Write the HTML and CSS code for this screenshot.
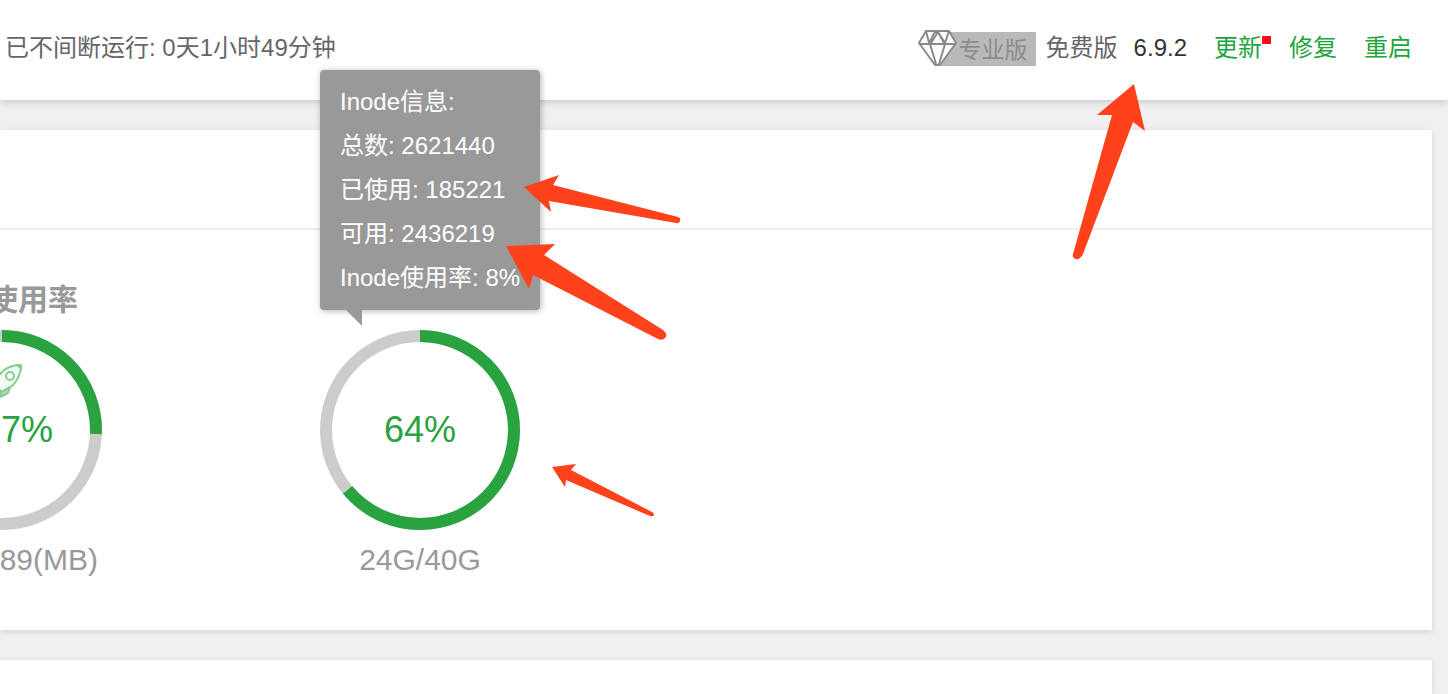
FILE: index.html
```html
<!DOCTYPE html>
<html lang="zh-CN">
<head>
<meta charset="utf-8">
<title>Inode信息</title>
<link rel="stylesheet" href="styles.css">
</head>
<body>
<header class="topbar">
  <span class="uptime">已不间断运行: 0天1小时49分钟</span>
  <div class="topbar-right">
    <span class="badge">
      <svg class="badge-gem" width="40" height="36" viewBox="0 0 40 36" aria-hidden="true">
        <path d="M8 1H31L38 13L22 35H17L1 13Z" fill="#fff" stroke="#8a8a8a" stroke-width="2" stroke-linejoin="round"/>
        <path d="M1 14H38M8 1L11 13L17 2L20 2L27 13L31 1M13 13L20 2M26 13L20 2M12 14L18 34M27 14L21 34" fill="none" stroke="#8a8a8a" stroke-width="2" stroke-linejoin="round"/>
      </svg>
      <span class="badge-label">专业版</span>
    </span>
    <span class="edition">免费版</span>
    <span class="version">6.9.2</span>
    <nav class="actions">
      <a class="has-update" href="#update">更新</a>
      <a href="#repair">修复</a>
      <a href="#restart">重启</a>
    </nav>
  </div>
</header>
<main class="content">
  <section class="panel">
    <div class="panel-head"></div>
    <div class="gauges">
      <div class="gauge gauge-memory">
        <h3 class="gauge-title">使用率</h3>
        <div class="ring">
          <svg width="200" height="200" viewBox="0 0 200 200" aria-hidden="true">
            <circle class="track" cx="100" cy="100" r="94"/>
            <circle class="bar" cx="100" cy="100" r="94" pathLength="100" stroke-dasharray="25.7 100" transform="rotate(-90 100 100)"/>
            <g fill="none" stroke="#86cc93" stroke-width="2" stroke-linejoin="round">
              <path d="M119 35C110 35 103 38 98 44L91 54L100 62L110 56C116 50 119 44 119 35Z" fill="#f1faf3"/>
              <circle cx="108" cy="46" r="4"/>
              <path d="M99 62L99 67L106 63L108 57Z" fill="#a9dbb2"/>
            </g>
            <path d="M113 34H120V41Z" fill="#86cc93"/>
          </svg>
          <span class="ring-value">7%</span>
        </div>
        <div class="gauge-label">89(MB)</div>
      </div>
      <div class="gauge gauge-disk">
        <div class="ring">
          <svg width="200" height="200" viewBox="0 0 200 200" aria-hidden="true">
            <circle class="track" cx="100" cy="100" r="94"/>
            <circle class="bar" cx="100" cy="100" r="94" pathLength="100" stroke-dasharray="64 100" transform="rotate(-90 100 100)"/>
          </svg>
          <span class="ring-value">64%</span>
          <div class="tooltip" role="tooltip">
            <div>Inode信息:</div>
            <div>总数: 2621440</div>
            <div>已使用: 185221</div>
            <div>可用: 2436219</div>
            <div>Inode使用率: 8%</div>
          </div>
        </div>
        <div class="gauge-label">24G/40G</div>
      </div>
    </div>
  </section>
  <section class="panel panel-next"></section>
</main>
<svg class="marks marks-gauge" width="190" height="350" viewBox="500 170 190 350" aria-hidden="true">
  <path d="M524 187L559 175L553 185L678 217Q681 218 680 221Q679 224 676 223L549 201L551 212Z"/>
  <path d="M506 246L555 244L544 255L663 330Q667 333 666 337Q663 341 658 339L533 275L529 289Z"/>
  <path d="M552 467L576 464L571 470L652 512Q654 513 654 515Q653 517 650 516L566 480L565 487Z"/>
</svg>
<svg class="marks marks-version" width="80" height="180" viewBox="1070 82 80 180" aria-hidden="true">
  <path d="M1134 84L1145 131L1133 122L1083 254Q1080 260 1076 259Q1072 258 1073 254L1112 115H1097Z"/>
</svg>
</body>
</html>
```
FILE: styles.css
```css
* {
  box-sizing: border-box;
}

body {
  position: relative;
  display: flex;
  flex-direction: column;
  height: 100vh;
  margin: 0;
  overflow: hidden;
  background: #f0f0f0;
  color: #666;
  font: 24px/44px "Liberation Sans", "Noto Sans CJK SC", sans-serif;
}

.topbar {
  display: flex;
  flex: none;
  justify-content: space-between;
  height: 100px;
  padding: 26px 36px 0 5px;
  background: #fff;
  box-shadow: 0 1px 8px rgba(0, 0, 0, 0.2);
}

.topbar-right,
.actions {
  display: flex;
}

.badge {
  position: relative;
  width: 118px;
  height: 36px;
  margin: 4px 10px 0 0;
  padding-left: 41px;
  background: linear-gradient(#b9b9b9, #b9b9b9) 18px 2px / 100px 34px no-repeat;
  color: #8c8c8c;
  font-size: 23px;
  line-height: 40px;
}

.badge-gem {
  position: absolute;
  top: 0;
  left: 0;
}

.version {
  margin: 0 27px 0 16px;
  color: #333;
}

.actions {
  gap: 27px;
}

.actions a {
  color: #20a53a;
  text-decoration: none;
}

.has-update {
  position: relative;
}

.has-update::after {
  content: "";
  position: absolute;
  top: 10px;
  right: -9px;
  width: 9px;
  height: 8px;
  background: #fc0d1b;
}

.content {
  display: flex;
  flex: 1;
  flex-direction: column;
  gap: 30px;
  padding: 30px 16px 0 0;
}

.panel {
  flex: none;
  background: #fff;
  box-shadow: 0 2px 6px rgba(0, 0, 0, 0.12);
}

.panel-next {
  flex: 1;
}

.panel-head {
  height: 100px;
  border-bottom: 2px solid #eee;
}

.gauges {
  display: flex;
  align-items: flex-end;
  gap: 218px;
  margin-left: -98px;
  padding: 40px 0;
}

.gauge {
  width: 200px;
  color: #999;
  font-size: 30px;
  line-height: 60px;
  text-align: center;
}

.gauge-title {
  margin: 0;
  font-size: 30px;
}

.ring {
  position: relative;
  display: grid;
  height: 200px;
}

.ring > svg,
.ring-value {
  grid-area: 1 / 1;
}

.track,
.bar {
  fill: none;
  stroke: #ccc;
  stroke-width: 12;
}

.bar {
  stroke: #29a33f;
}

.ring-value {
  align-self: center;
  color: #29a33f;
  font-size: 36px;
}

.gauge-memory {
  text-align: right;
}

.gauge-memory .gauge-title {
  padding-right: 24px;
}

.gauge-memory .ring-value {
  padding-right: 49px;
}

.gauge-memory .gauge-label {
  padding-right: 4px;
}

.tooltip {
  position: absolute;
  bottom: 220px;
  left: 0;
  padding: 10px 20px;
  border-radius: 4px;
  background: #999;
  box-shadow: 1px 1px 6px rgba(0, 0, 0, 0.3);
  color: #fff;
  font-size: 24px;
  line-height: 44px;
  text-align: left;
  white-space: nowrap;
}

.tooltip::after {
  content: "";
  position: absolute;
  top: 100%;
  left: 26px;
  width: 16px;
  height: 16px;
  background: #999;
  clip-path: polygon(0 0, 100% 0, 100% 100%);
}

.marks {
  position: absolute;
  fill: #ff421c;
  pointer-events: none;
}

.marks-gauge {
  top: 170px;
  left: 500px;
}

.marks-version {
  top: 82px;
  right: 298px;
}
```
